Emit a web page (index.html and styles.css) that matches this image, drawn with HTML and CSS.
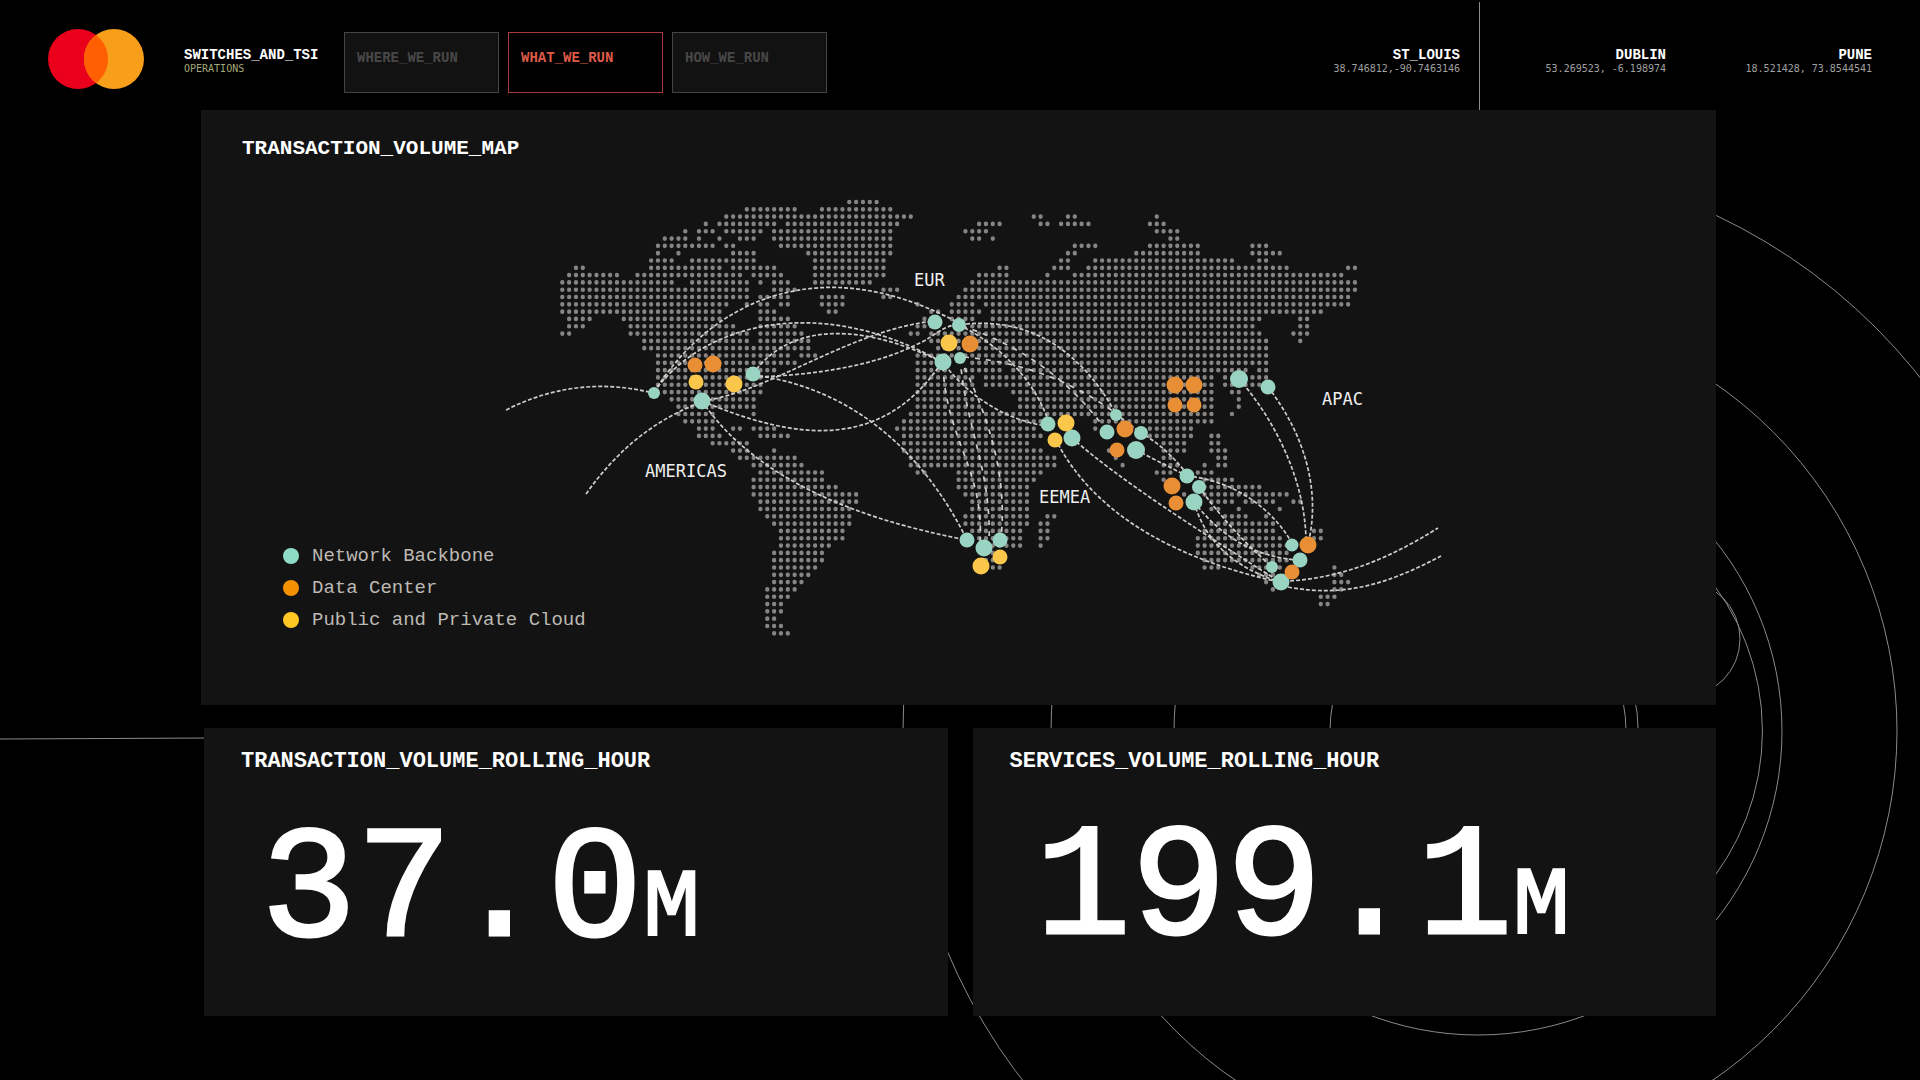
FILE: index.html
```html
<!DOCTYPE html>
<html lang="en">
<head>
<meta charset="utf-8">
<title>Switches and TSI Operations</title>
<link rel="stylesheet" href="styles.css">
</head>
<body>
<svg class="rings" viewBox="0 0 1920 1080" aria-hidden="true">
  <path d="M0 739L210 738M1479.500 2V120"/>
  <circle cx="1473" cy="731" r="570"/>
  <circle cx="1474" cy="731" r="423"/>
  <circle cx="1478" cy="731" r="304"/>
  <circle cx="1478" cy="731" r="148"/>
  <circle cx="1682" cy="639" r="58"/>
  <path d="M1700 568A244 244 0 0 1 1700 894M1634 695A160 160 0 0 1 1634 767"/>
</svg>

<header class="topbar">
  <svg class="logo" viewBox="0 0 96 60" role="img" aria-label="Mastercard">
    <circle cx="30" cy="30" r="30" fill="#eb001b"/>
    <circle cx="66" cy="30" r="30" fill="#f79e1b"/>
    <path d="M48 6a30 30 0 0 1 0 48a30 30 0 0 1 0-48z" fill="#ff5f00"/>
  </svg>
  <div class="brand">
    <h1 class="title">SWITCHES_AND_TSI</h1>
    <p class="sub">OPERATIONS</p>
  </div>
  <nav class="tabs">
    <button class="tab" type="button">WHERE_WE_RUN</button>
    <button class="tab active" type="button" aria-current="page">WHAT_WE_RUN</button>
    <button class="tab" type="button">HOW_WE_RUN</button>
  </nav>
  <ul class="sites">
    <li class="site"><strong class="title">ST_LOUIS</strong><span class="coords">38.746812,-90.7463146</span></li>
    <li class="site"><strong class="title">DUBLIN</strong><span class="coords">53.269523, -6.198974</span></li>
    <li class="site"><strong class="title">PUNE</strong><span class="coords">18.521428, 73.8544541</span></li>
  </ul>
</header>

<main class="board">
  <section class="panel map-panel">
    <svg class="map" viewBox="201 110 1515 595" role="img" aria-label="World map of transaction volume">
      <path class="land" transform="matrix(6.833 0 0 7.31 562.3 202)" d="M42 0h4.1
M27 1h7.1M38 1h10.1
M24 2h27.1M69 2h1.1M74 2h1.1M87 2h.1
M21 3h.1M23 3h8.1M33 3h16.1M61 3h3.1M70 3h1.1M73 3h4.1M86 3h2.1
M18 4h.1M20 4h2.1M24 4h5.1M31 4h17.1M59 4h3.1M87 4h3.1
M15 5h3.1M20 5h.1M23 5h.1M26 5h2.1M31 5h17.1M60 5h1.1M63 5h.1M89 5h1.1
M14 6h8.1M24 6h1.1M32 6h16.1M75 6h3.1M86 6h7.1M101 6h2.1
M14 7h.1M17 7h.1M25 7h3.1M36 7h12.1M74 7h1.1M84 7h9.1M101 7h4.1
M13 8h3.1M19 8h9.1M37 8h10.1M73 8h1.1M78 8h20.1M102 8h1.1
M2 9h1.1M13 9h4.1M18 9h5.1M25 9h6.1M37 9h10.1M64 9h1.1M72 9h2.1M77 9h29.1M115 9h1.1
M1 10h7.1M11 10h4.1M16 10h10.1M28 10h4.1M37 10h10.1M61 10h4.1M71 10h.1M75 10h39.1
M0 11h16.1M19 11h8.1M29 11h.1M31 11h2.1M37 11h8.1M60 11h56.1
M0 12h27.1M31 12h3.1M47 12h2.1M59 12h57.1
M0 13h27.1M29 13h4.1M38 13h3.1M47 13h1.1M58 13h57.1
M0 14h24.1M27 14h.1M29 14h1.1M32 14h1.1M38 14h3.1M52 14h.1M57 14h3.1M62 14h53.1
M0 15h23.1M29 15h2.1M39 15h1.1M54 15h1.1M57 15h4.1M63 15h48.1
M1 16h3.1M9 16h14.1M29 16h4.1M53 16h1.1M57 16h3.1M63 16h39.1M108 16h1.1
M1 17h2.1M10 17h15.1M29 17h5.1M52 17h2.1M60 17h41.1M108 17h1.1
M0 18h1.1M10 18h17.1M29 18h6.1M51 18h1.1M54 18h48.1M107 18h2.1
M12 19h15.1M29 19h7.1M54 19h49.1M108 19h.1
M12 20h24.1M55 20h48.1
M14 21h19.1M35 21h2.1M52 21h51.1
M14 22h20.1M52 22h3.1M60 22h43.1
M14 23h17.1M52 23h4.1M59 23h5.1M66 23h34.1M102 23h1.1
M14 24h15.1M52 24h8.1M62 24h33.1M97 24h.1M101 24h2.1
M14 25h15.1M52 25h8.1M62 25h33.1M97 25h5.1
M15 26h14.1M52 26h7.1M66 26h29.1M98 26h1.1
M16 27h12.1M52 27h8.1M67 27h28.1M99 27h.1
M17 28h11.1M52 28h9.1M67 28h28.1M99 28h.1
M17 29h5.1M28 29h.1M51 29h44.1M98 29h.1
M18 30h4.1M50 30h20.1M78 30h17.1
M20 31h2.1M25 31h1.1M28 31h3.1M49 31h20.1M78 31h.1M86 31h6.1
M20 32h3.1M29 32h4.1M50 32h20.1M86 32h6.1M95 32h1.1
M22 33h5.1M50 33h18.1M88 33h3.1M95 33h1.1
M25 34h2.1M31 34h.1M50 34h20.1M80 34h.1M88 34h3.1M95 34h2.1
M26 35h8.1M51 35h21.1M81 35h.1M88 35h1.1M96 35h1.1
M28 36h7.1M51 36h21.1M82 36h.1M88 36h2.1M94 36h.1M96 36h1.1
M29 37h9.1M52 37h1.1M58 37h12.1M87 37h2.1M93 37h2.1
M28 38h10.1M58 38h11.1M88 38h.1M94 38h4.1
M28 39h12.1M58 39h10.1M94 39h8.1
M28 40h15.1M59 40h9.1M91 40h.1M94 40h12.1
M29 41h14.1M60 41h8.1M95 41h3.1M100 41h4.1M107 41h1.1
M29 42h13.1M60 42h8.1M95 42h1.1M99 42h.1M105 42h.1
M30 43h12.1M59 43h9.1M71 43h1.1M97 43h3.1M103 43h.1
M31 44h11.1M59 44h9.1M70 44h1.1M95 44h9.1
M32 45h9.1M60 45h7.1M70 45h1.1M94 45h10.1M110 45h1.1
M32 46h9.1M61 46h6.1M70 46h1.1M93 46h12.1M110 46h1.1
M32 47h7.1M61 47h6.1M70 47h.1M93 47h13.1
M31 48h7.1M62 48h2.1M93 48h13.1
M31 49h7.1M62 49h2.1M94 49h12.1
M31 50h6.1M63 50h1.1M94 50h2.1M101 50h4.1M113 50h.1
M31 51h5.1M102 51h2.1M113 51h1.1
M31 52h4.1M103 52h.1M113 52h2.1
M30 53h4.1M104 53h.1M113 53h1.1
M30 54h3.1M111 54h2.1
M30 55h2.1M111 55h1.1
M30 56h2.1M30 57h1.1M30 58h2.1M31 59h2.1"/>
      <g class="links">
        <path d="M506 410Q575 375 649 392"/>
        <path d="M586 494Q632 429 697 404"/>
        <path d="M654 392C712 300 820 250 955 321"/>
        <path d="M654 392C704 322 820 294 940 361"/>
        <path d="M753 374C785 328 850 318 940 361"/>
        <path d="M702 401C770 392 850 330 934 321"/>
        <path d="M753 377C860 374 905 350 920 343S940 327 959 324"/>
        <path d="M753 375C855 388 925 455 967 540"/>
        <path d="M702 401C790 438 880 455 942 362"/>
        <path d="M702 401C752 475 850 518 967 540"/>
        <path d="M945 365C970 398 1010 422 1048 426"/>
        <path d="M959 325C1000 345 1034 380 1048 420"/>
        <path d="M966 324C1030 318 1080 350 1115 412"/>
        <path d="M1058 444C1098 518 1180 560 1279 582"/>
        <path d="M1072 438C1120 480 1190 525 1280 582"/>
        <path d="M1136 450L1187 476M1116 414L1141 433Q1165 446 1187 474"/>
        <path d="M1187 476C1230 480 1270 505 1292 543"/>
        <path d="M1199 487Q1230 530 1272 567"/>
        <path d="M1194 502Q1235 555 1297 560"/>
        <path d="M1194 502Q1210 560 1280 582"/>
        <path d="M1239 379C1275 420 1305 480 1306 540"/>
        <path d="M1268 387C1305 435 1320 490 1309 540"/>
        <path d="M1290 581C1345 577 1390 558 1438 528"/>
        <path d="M1288 587C1345 598 1390 583 1441 556"/>
      </g>
      <g class="links sparse">
        <path d="M943 366C946 440 985 470 980 545"/>
        <path d="M960 358C966 430 992 470 989 545"/>
        <path d="M960 358C985 410 1008 470 1001 538"/>
        <path d="M962 326C1020 345 1070 380 1105 429"/>
        <path d="M964 357C1020 362 1070 380 1114 412"/>
      </g>
      <g class="backbone">
        <circle cx="654" cy="393" r="6"/><circle cx="753" cy="374" r="7.500"/><circle cx="702" cy="401" r="8.500"/>
        <circle cx="935" cy="322" r="7.500"/><circle cx="959" cy="325" r="7"/><circle cx="943" cy="362" r="8.500"/><circle cx="960" cy="358" r="6"/>
        <circle cx="1239" cy="379" r="9"/><circle cx="1268" cy="387" r="7.500"/>
        <circle cx="1048" cy="424" r="7.500"/><circle cx="1072" cy="438" r="8.500"/>
        <circle cx="1116" cy="415" r="6"/><circle cx="1107" cy="432" r="7.500"/><circle cx="1141" cy="433" r="7"/><circle cx="1136" cy="450" r="9"/>
        <circle cx="1187" cy="476" r="7.500"/><circle cx="1199" cy="487" r="7"/><circle cx="1194" cy="502" r="8.500"/>
        <circle cx="967" cy="540" r="7.500"/><circle cx="984" cy="548" r="8.500"/><circle cx="1000" cy="540" r="7.500"/>
        <circle cx="1292" cy="545" r="6.500"/><circle cx="1300" cy="560" r="7.500"/><circle cx="1272" cy="567" r="6"/><circle cx="1281" cy="582" r="8.500"/>
      </g>
      <g class="datacenter">
        <circle cx="695" cy="365" r="7.500"/><circle cx="713" cy="364" r="8.500"/><circle cx="970" cy="344" r="8.500"/>
        <circle cx="1175" cy="385" r="8.500"/><circle cx="1194" cy="385" r="8.500"/><circle cx="1175" cy="405" r="7.500"/><circle cx="1194" cy="405" r="7.500"/>
        <circle cx="1125" cy="429" r="8.500"/><circle cx="1117" cy="450" r="7.500"/><circle cx="1172" cy="486" r="8.500"/><circle cx="1176" cy="503" r="7.500"/>
        <circle cx="1308" cy="545" r="8.500"/><circle cx="1292" cy="572" r="7.500"/>
      </g>
      <g class="cloud">
        <circle cx="696" cy="382" r="7.500"/><circle cx="734" cy="384" r="8.500"/><circle cx="949" cy="343" r="8.500"/>
        <circle cx="1066" cy="423" r="8.500"/><circle cx="1055" cy="440" r="7.500"/><circle cx="1000" cy="557" r="7.500"/><circle cx="981" cy="566" r="8.500"/>
      </g>
      <g class="regions">
        <text x="914" y="286">EUR</text>
        <text x="1322" y="405">APAC</text>
        <text x="645" y="477">AMERICAS</text>
        <text x="1039" y="503">EEMEA</text>
      </g>
    </svg>
    <h2 class="heading map-heading">TRANSACTION_VOLUME_MAP</h2>
    <ul class="legend">
      <li class="key"><span class="dot teal"></span>Network Backbone</li>
      <li class="key"><span class="dot orange"></span>Data Center</li>
      <li class="key"><span class="dot yellow"></span>Public and Private Cloud</li>
    </ul>
  </section>

  <div class="stats">
    <section class="panel stat">
      <h2 class="heading">TRANSACTION_VOLUME_ROLLING_HOUR</h2>
      <p class="figure">37.0<span class="unit">M</span></p>
    </section>
    <section class="panel stat services">
      <h2 class="heading">SERVICES_VOLUME_ROLLING_HOUR</h2>
      <p class="figure">199.1<span class="unit">M</span></p>
    </section>
  </div>
</main>
</body>
</html>
```
FILE: styles.css
```css
* { box-sizing: border-box; }

body {
  margin: 0;
  position: relative;
  min-height: 100vh;
  overflow-x: hidden;
  background: #000;
  color: #fff;
  font-family: "DejaVu Sans Mono", "Liberation Mono", monospace;
}

h1, h2, p, ul { margin: 0; padding: 0; font-weight: 400; }
ul { list-style: none; }

.rings {
  position: absolute;
  inset: 0;
  width: 100%;
  z-index: -1;
  fill: none;
  stroke: #8a8a8a;
  stroke-width: 1;
}

.topbar {
  display: flex;
  align-items: flex-start;
  height: 110px;
  padding: 0 48px;
}

.logo { width: 96px; height: 60px; margin: 29px 40px 0 0; }
.brand { width: 160px; padding-top: 47px; }

.title {
  display: block;
  font: 700 14px/16px "Liberation Mono", monospace;
}

.sub, .coords {
  display: block;
  font-size: 10px;
  line-height: 11px;
  color: #a0a0a0;
}
.sub { color: #a3a878; }

.tabs { display: flex; gap: 9px; padding-top: 32px; }

.tab {
  display: flex;
  align-items: flex-start;
  width: 155px;
  height: 61px;
  padding: 17px 12px;
  border: 1px solid #444;
  background: #121212;
  color: #484848;
  font: 700 14px/16px "Liberation Mono", monospace;
}
.tab.active { border-color: #a83c40; background: #000; color: #dd5a48; }

.sites { display: flex; margin-left: auto; padding-top: 47px; }
.site { width: 206px; text-align: right; }

.board { padding: 0 204px 0 201px; }

.panel { background: #131313; }

.heading {
  font: 700 22px/26px "Liberation Mono", monospace;
}

.map-panel { display: grid; }
.map, .map-heading, .legend { grid-area: 1 / 1; }
.map { display: block; width: 100%; }
.map-heading { padding: 26px 41px; font-size: 21px; }

.land {
  fill: none;
  stroke: #878583;
  stroke-width: .64;
  stroke-linecap: round;
  stroke-dasharray: 0 1;
}
.links { fill: none; stroke: #cfcdca; stroke-width: 1.7; stroke-dasharray: 4 2; }
.sparse { stroke-dasharray: 5 6; }
.backbone { fill: #99d3c1; }
.datacenter { fill: #e88f35; }
.cloud { fill: #fac74a; }
.regions { fill: #f0f0f0; font-size: 17px; }

.legend { align-self: end; padding: 0 82px 69px; }
.key {
  display: flex;
  align-items: center;
  gap: 13px;
  height: 32px;
  color: #bdb9b4;
  font: 19px/32px "Liberation Mono", monospace;
}
.dot { width: 16px; height: 16px; border-radius: 50%; }
.teal { background: #8fdcc6; }
.orange { background: #f59000; }
.yellow { background: #ffc722; }

.stats {
  display: grid;
  grid-template-columns: 1fr 1fr;
  gap: 25px;
  padding: 23px 0 0 3px;
}
.stat { height: 288px; padding: 21px 37px; }
.figure {
  margin-top: 28px;
  padding-left: 20px;
  font: 400 159px/180px "Liberation Mono", monospace;
  -webkit-text-stroke: 3px #fff;
  white-space: nowrap;
}
.services .figure { margin-top: 26px; padding-left: 26px; }
.unit { font-size: 96px; -webkit-text-stroke-width: 2px; }
```
